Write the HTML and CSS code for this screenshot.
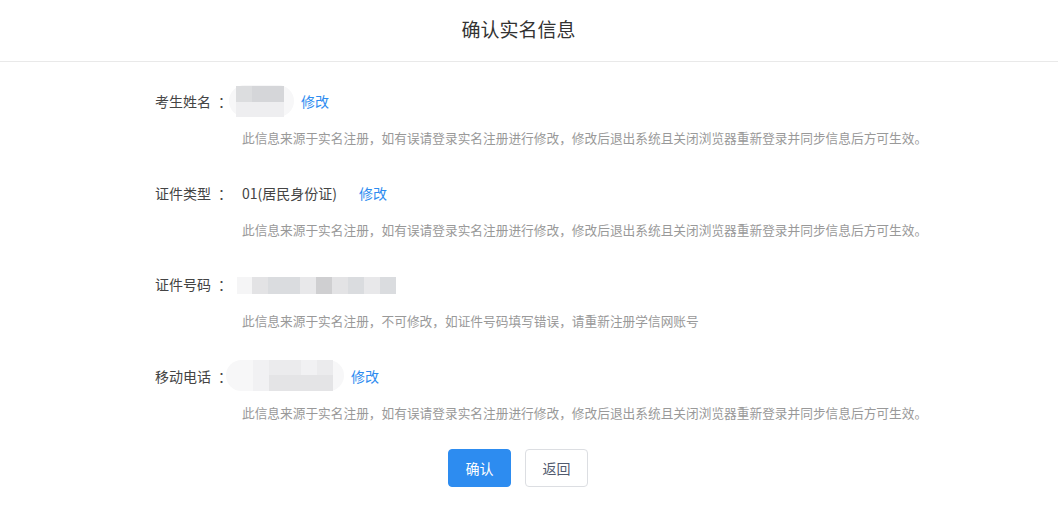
FILE: index.html
```html
<!DOCTYPE html>
<html lang="zh-CN">
<head>
<meta charset="utf-8">
<title>确认实名信息</title>
<link rel="stylesheet" href="styles.css">
</head>
<body>
<div class="page">
  <header class="header"><h1 class="title">确认实名信息</h1></header>
  <main class="content">
    <section class="row">
      <div class="main">
        <span class="label">考生姓名<span class="colon">：</span></span>
        <span class="blur blur-name">
          <span class="cells">
            <i class="c1"></i><i class="c2"></i><i class="c2"></i>
            <i class="c4"></i><i class="c4"></i><i class="c4"></i>
          </span>
        </span>
        <a class="link link-name">修改</a>
      </div>
      <p class="hint">此信息来源于实名注册，如有误请登录实名注册进行修改，修改后退出系统且关闭浏览器重新登录并同步信息后方可生效。</p>
    </section>
    <section class="row">
      <div class="main">
        <span class="label">证件类型<span class="colon">：</span></span>
        <span class="value">01(居民身份证)</span>
        <a class="link link-type">修改</a>
      </div>
      <p class="hint">此信息来源于实名注册，如有误请登录实名注册进行修改，修改后退出系统且关闭浏览器重新登录并同步信息后方可生效。</p>
    </section>
    <section class="row">
      <div class="main">
        <span class="label">证件号码<span class="colon">：</span></span>
        <span class="strip">
          <i class="s0"></i><i class="s1"></i><i class="s2"></i><i class="s2"></i><i class="s3"></i><i class="s5"></i><i class="s1"></i><i class="s2"></i><i class="s3"></i><i class="s2"></i>
        </span>
      </div>
      <p class="hint">此信息来源于实名注册，不可修改，如证件号码填写错误，请重新注册学信网账号</p>
    </section>
    <section class="row">
      <div class="main">
        <span class="label">移动电话<span class="colon">：</span></span>
        <span class="blur blur-phone">
          <span class="cells cells-phone">
            <i class="p0"></i><i class="p1"></i><i class="p1"></i><i class="p0"></i><i class="p1"></i><i class="p0"></i>
            <i class="p0"></i><i class="p2"></i><i class="p2"></i><i class="p2"></i><i class="p2"></i><i class="p3"></i>
          </span>
        </span>
        <a class="link link-phone">修改</a>
      </div>
      <p class="hint">此信息来源于实名注册，如有误请登录实名注册进行修改，修改后退出系统且关闭浏览器重新登录并同步信息后方可生效。</p>
    </section>
    <div class="actions">
      <button class="btn btn-primary">确认</button>
      <button class="btn btn-default">返回</button>
    </div>
  </main>
</div>
</body>
</html>
```
FILE: styles.css
```css
* { box-sizing: border-box; }
html, body { margin: 0; padding: 0; background: #fff; }
body {
  font-family: "Microsoft YaHei", "Noto Sans CJK SC", "Noto Sans", sans-serif;
  color: #333;
  width: 1058px;
}
.page { width: 1058px; }
.header {
  height: 62px;
  border-bottom: 1px solid #e9e9e9;
  display: flex;
  align-items: center;
  justify-content: center;
  padding-right: 21px;
}
.title {
  margin: 0;
  font-size: 19px;
  font-weight: normal;
  color: #333;
  line-height: 24px;
  margin-top: -3px;
}
.content {
  padding: 23px 0 0 155px;
}
.row { margin-bottom: 28.5px; }
.main {
  display: flex;
  align-items: center;
  height: 32px;
  font-size: 14px;
}
.label {
  width: 87px;
  flex: none;
  color: #444;
}
.colon { margin-left: 7px; }
.value { color: #444; }
.link {
  color: #2d8cf0;
  cursor: pointer;
}
.link-name { margin-left: 7px; }
.link-type { margin-left: 22px; }
.link-phone { margin-left: 7px; }
.hint {
  margin: 11px 0 0 87px;
  font-size: 12.7px;
  line-height: 20px;
  color: #999;
}
.blur {
  display: inline-flex;
  align-items: center;
  background: #f7f7f8;
  border-radius: 16px;
}
.blur-name {
  margin-left: -13px;
  height: 32px;
  padding: 0 10px 0 7px;
}
.cells {
  display: grid;
  grid-template-columns: repeat(3, 16px);
  grid-template-rows: 16px 15px;
}
.cells i { display: block; }
.c1 { background: #dcdddf; }
.c2 { background: #d5d6d9; }
.c4 { background: #eeeef0; }
.blur-phone {
  margin-left: -16px;
  height: 31px;
  padding: 0 11px 0 27px;
}
.cells-phone {
  grid-template-columns: 16px 16px 16px 16px 16px 0;
  grid-template-rows: 15px 16px;
}
.p0 { background: #f1f1f3; }
.p1 { background: #ebebed; }
.p2 { background: #e4e4e6; }
.p3 { background: #e0e0e2; }
.strip {
  display: flex;
  height: 17px;
  margin-left: -5px;
  margin-top: 2px;
}
.strip i { display: block; width: 16px; height: 17px; }
.strip i:first-child { width: 15px; }
.s0 { background: #f5f5f6; }
.s1 { background: #e3e3e5; }
.s2 { background: #dadcdf; }
.s3 { background: #e8e8ea; }
.s5 { background: #cfcfd1; }
.actions {
  display: flex;
  gap: 14px;
  padding-left: 293px;
  margin-top: -2.5px;
}
.btn {
  height: 38px;
  width: 63px;
  border-radius: 4px;
  font-family: inherit;
  font-size: 14px;
  cursor: pointer;
}
.btn-primary {
  background: #2d8cf0;
  border: 1px solid #2d8cf0;
  color: #fff;
}
.btn-default {
  background: #fff;
  border: 1px solid #dcdee2;
  color: #515a6e;
}
```
